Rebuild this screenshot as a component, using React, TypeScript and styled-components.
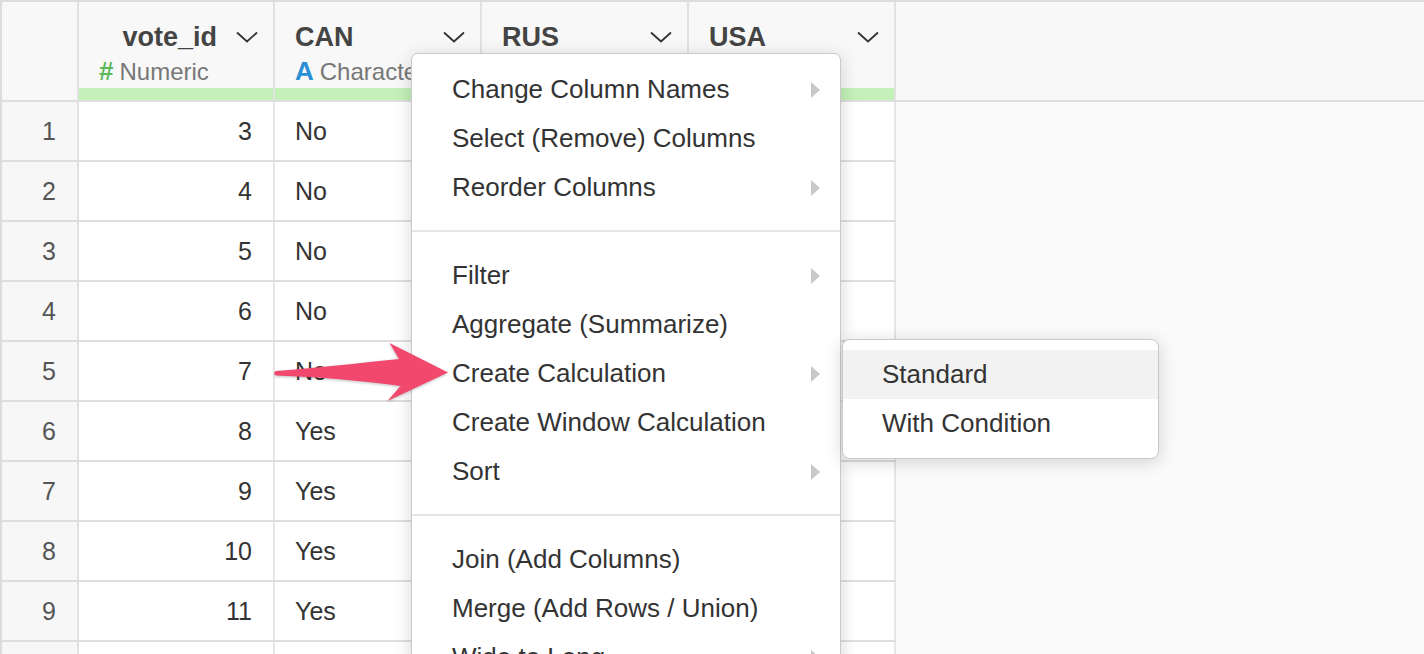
import React from 'react';
import styled, { createGlobalStyle } from 'styled-components';

const Global = createGlobalStyle`
  html, body { margin: 0; padding: 0; background: #fafafa; overflow: hidden; }
  body { font-family: "Liberation Sans", Arial, Helvetica, sans-serif; }
  #root { width: 1424px; height: 654px; }
`;

const Page = styled.div`
  position: relative;
  width: 1424px;
  height: 654px;
  overflow: hidden;
  box-sizing: border-box;
  border-top: 2px solid #dcdcdc;
  border-left: 2px solid #dcdcdc;
  background: #fafafa;
`;

const HeaderRow = styled.div`
  display: flex;
  height: 100px;
  box-sizing: border-box;
  border-bottom: 2px solid #dedede;
  background: #f8f8f8;
`;

const HeaderCell = styled.div<{ $w: number }>`
  width: ${(p) => p.$w}px;
  flex: none;
  box-sizing: border-box;
  border-right: 2px solid #e2e2e2;
  display: flex;
  flex-direction: column;
`;

const HeaderFiller = styled.div`
  flex: 1;
`;

const HeaderBody = styled.div`
  height: 86px;
  box-sizing: border-box;
  padding: 20px 15px 0 20px;
  display: flex;
  flex-direction: column;
  gap: 6px;
  overflow: hidden;
`;

const NameLine = styled.div`
  display: flex;
  align-items: center;
  height: 30px;
`;

const ColName = styled.div<{ $right?: boolean }>`
  flex: 1;
  font-size: 27px;
  font-weight: 700;
  color: #444;
  text-align: ${(p) => (p.$right ? 'right' : 'left')};
  white-space: nowrap;
`;

const Chevron = styled.svg`
  width: 22px;
  height: 12px;
  margin-left: 19px;
  flex: none;
`;

const TypeLine = styled.div`
  height: 26px;
  line-height: 26px;
  font-size: 24px;
  color: #777;
  white-space: nowrap;
`;

const TypeMark = styled.span<{ $color: string }>`
  color: ${(p) => p.$color};
  font-weight: 700;
  font-size: 26px;
  margin-right: 6px;
`;

const GreenBar = styled.div`
  height: 12px;
  background: #c3f1b9;
`;

const BodyRow = styled.div`
  display: flex;
  width: 894px;
  height: 60px;
  box-sizing: border-box;
  border-bottom: 2px solid #dedede;
`;

const RowNum = styled.div`
  width: 77px;
  flex: none;
  box-sizing: border-box;
  border-right: 2px solid #e2e2e2;
  background: #f7f7f7;
  color: #555;
  font-size: 25px;
  text-align: right;
  padding-right: 21px;
  line-height: 58px;
`;

const Cell = styled.div<{ $w: number; $right?: boolean }>`
  width: ${(p) => p.$w}px;
  flex: none;
  box-sizing: border-box;
  border-right: 2px solid #e6e6e6;
  background: #fff;
  color: #333;
  font-size: 25px;
  line-height: 58px;
  text-align: ${(p) => (p.$right ? 'right' : 'left')};
  padding: ${(p) => (p.$right ? '0 21px 0 0' : '0 0 0 20px')};
  white-space: nowrap;
  overflow: hidden;
`;

const Menu = styled.div`
  position: absolute;
  left: 409px;
  top: 51px;
  width: 430px;
  height: 640px;
  box-sizing: border-box;
  background: #fff;
  border: 1px solid #c9c9c9;
  border-radius: 7px;
  box-shadow: 0 3px 18px rgba(0, 0, 0, 0.16);
  padding: 11px 0 10px;
  z-index: 2;
`;

const SubMenu = styled(Menu)`
  left: 840px;
  top: 337px;
  width: 317px;
  height: auto;
  border-radius: 8px;
  padding: 10px 0;
  z-index: 3;
`;

const Item = styled.div<{ $active?: boolean }>`
  height: 49px;
  display: flex;
  align-items: center;
  justify-content: space-between;
  padding: 0 20px 0 40px;
  font-size: 26px;
  color: #333;
  background: ${(p) => (p.$active ? '#f2f2f2' : 'transparent')};
  white-space: nowrap;
`;

const SubItem = styled(Item)`
  padding-left: 39px;
`;

const Caret = styled.span`
  width: 0;
  height: 0;
  border-top: 8.5px solid transparent;
  border-bottom: 8.5px solid transparent;
  border-left: 9px solid #c8c8c8;
`;

const Separator = styled.div`
  height: 2px;
  background: #e6e6e6;
  margin: 18px 0 19px;
`;

const Arrow = styled.svg`
  position: absolute;
  left: 268px;
  top: 333px;
  width: 188px;
  height: 76px;
  z-index: 4;
  filter: drop-shadow(0 1px 1.5px rgba(0, 0, 0, 0.25));
`;

type Col = { name: string; numeric: boolean; w: number };

const cols: Col[] = [
  { name: 'vote_id', numeric: true, w: 196 },
  { name: 'CAN', numeric: false, w: 207 },
  { name: 'RUS', numeric: false, w: 207 },
  { name: 'USA', numeric: false, w: 207 },
];

const rows: (string | number)[][] = [
  [3, 'No', '', ''],
  [4, 'No', '', ''],
  [5, 'No', '', ''],
  [6, 'No', '', ''],
  [7, 'No', '', ''],
  [8, 'Yes', '', ''],
  [9, 'Yes', '', ''],
  [10, 'Yes', '', ''],
  [11, 'Yes', '', ''],
  [12, 'Yes', '', ''],
];

type MenuEntry = { label: string; sub?: boolean } | 'sep';

const menu: MenuEntry[] = [
  { label: 'Change Column Names', sub: true },
  { label: 'Select (Remove) Columns' },
  { label: 'Reorder Columns', sub: true },
  'sep',
  { label: 'Filter', sub: true },
  { label: 'Aggregate (Summarize)' },
  { label: 'Create Calculation', sub: true },
  { label: 'Create Window Calculation' },
  { label: 'Sort', sub: true },
  'sep',
  { label: 'Join (Add Columns)' },
  { label: 'Merge (Add Rows / Union)' },
  { label: 'Wide to Long', sub: true },
  { label: 'Long to Wide', sub: true },
];

const ChevronIcon = () => (
  <Chevron viewBox="0 0 22 12">
    <polyline points="1,1.5 11,10.5 21,1.5" fill="none" stroke="#333" strokeWidth="1.8" />
  </Chevron>
);

export default function App() {
  return (
    <>
      <Global />
      <Page>
        <HeaderRow>
          <HeaderCell $w={77} />
          {cols.map((c) => (
            <HeaderCell key={c.name} $w={c.w}>
              <HeaderBody>
                <NameLine>
                  <ColName $right={c.numeric}>{c.name}</ColName>
                  <ChevronIcon />
                </NameLine>
                {c.name !== 'RUS' && c.name !== 'USA' && (
                  <TypeLine>
                    {c.numeric ? (
                      <TypeMark $color="#5cb85c">#</TypeMark>
                    ) : (
                      <TypeMark $color="#2b8fd6">A</TypeMark>
                    )}
                    {c.numeric ? 'Numeric' : 'Character'}
                  </TypeLine>
                )}
              </HeaderBody>
              <GreenBar />
            </HeaderCell>
          ))}
          <HeaderFiller />
        </HeaderRow>
        {rows.map((r, i) => (
          <BodyRow key={i}>
            <RowNum>{i + 1}</RowNum>
            {cols.map((c, j) => (
              <Cell key={c.name} $w={c.w} $right={c.numeric}>
                {r[j]}
              </Cell>
            ))}
          </BodyRow>
        ))}

        <Menu>
          {menu.map((m, i) =>
            m === 'sep' ? (
              <Separator key={i} />
            ) : (
              <Item key={i}>
                <span>{m.label}</span>
                {m.sub && <Caret />}
              </Item>
            )
          )}
        </Menu>

        <SubMenu>
          <SubItem $active>Standard</SubItem>
          <SubItem>With Condition</SubItem>
        </SubMenu>

        <Arrow viewBox="270 335 188 76">
          <path
            d="M276,371 C320,367.5 360,363 399,359 L389.5,343 L448,372.5 L387.5,401 L400.5,386 C360,380.5 320,377 276,375.5 Q272.5,373.2 276,371 Z"
            fill="#f2486e"
          />
        </Arrow>
      </Page>
    </>
  );
}
